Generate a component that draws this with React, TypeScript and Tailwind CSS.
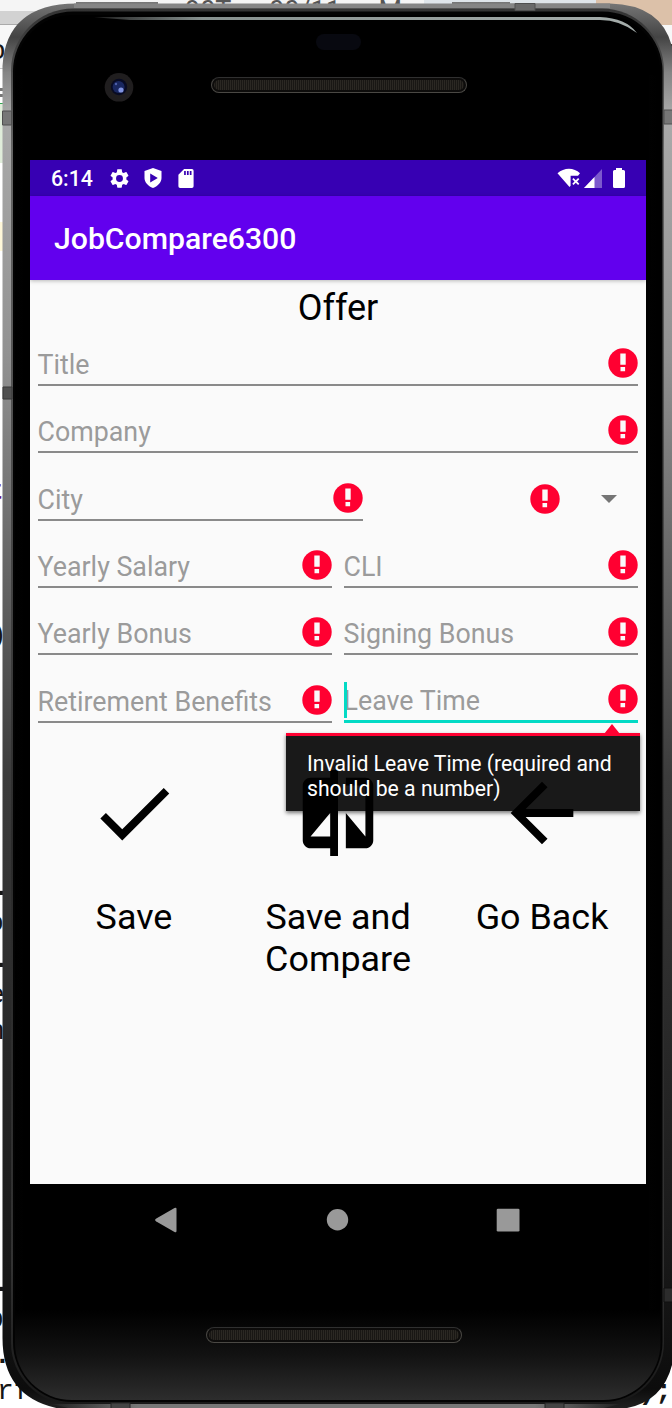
import React from "react";

function ErrorIcon() {
  return (
    <svg viewBox="0 0 30 30" className="-mt-[1px] h-[30px] w-[30px] shrink-0">
      <circle cx="15" cy="15" r="14.7" fill="#ff0031" />
      <path d="M12.3 5.6h5.4v11.2h-5.4zM12.5 19h4.6v4.2h-4.6z" fill="#fafafa" />
    </svg>
  );
}

function Field({ label, className = "flex-1", focused = false }: { label: string; className?: string; focused?: boolean }) {
  return (
    <div className={`relative -ml-[0.5px] flex h-[43px] items-center justify-between ${focused ? "border-b-[3px] border-[#03dac5]" : "border-b-2 border-[#8a8a8a]"} ${className}`}>
      <span className="whitespace-nowrap pt-[3px] text-[26.8px] leading-[32px] text-[#9b9b9b]">{label}</span>
      <ErrorIcon />
      {focused && <span className="absolute left-0 top-[2px] h-[36px] w-[3px] bg-[#03dac5]" />}
    </div>
  );
}

function Row({ children }: { children: React.ReactNode }) {
  return <div className="flex h-[67.4px] items-end gap-3">{children}</div>;
}

function Speaker() {
  return (
    <div className="h-4 w-[256px] rounded-full border border-[#4a4844] border-t-[#303030] bg-[#0d0c0b] p-[2px]">
      <div className="h-full w-full rounded-full bg-[repeating-linear-gradient(90deg,#2b2823_0px,#2b2823_1px,#191714_1px,#191714_2px)]" />
    </div>
  );
}

function Action({ label, path, wrap = "px-0" }: { label: string; path: string; wrap?: string }) {
  return (
    <div className="flex flex-1 flex-col items-center gap-[36px]">
      <svg viewBox="0 0 24 24" className="h-[94px] w-[94px]"><path d={path} /></svg>
      <span className={`text-center text-[35.9px] leading-[42px] text-black ${wrap}`}>{label}</span>
    </div>
  );
}

function StatusBar() {
  return (
    <div className="flex h-9 items-center bg-[#3700b3] px-[21px] text-white">
      <span className="w-[57px] pt-[2px] text-[21.3px] font-medium leading-none">6:14</span>
      <svg viewBox="0 0 24 24" className="h-[23px] w-[23px]" fill="white"><path d="M19.14 12.94c.04-.3.06-.61.06-.94 0-.32-.02-.64-.07-.94l2.03-1.58c.18-.14.23-.41.12-.61l-1.92-3.32c-.12-.22-.37-.29-.59-.22l-2.39.96c-.5-.38-1.03-.7-1.62-.94l-.36-2.54c-.04-.24-.24-.41-.48-.41h-3.84c-.24 0-.43.17-.47.41l-.36 2.54c-.59.24-1.13.57-1.62.94l-2.39-.96c-.22-.08-.47 0-.59.22L2.74 8.87c-.12.21-.08.47.12.61l2.03 1.58c-.05.3-.09.63-.09.94s.02.64.07.94l-2.03 1.58c-.18.14-.23.41-.12.61l1.92 3.32c.12.22.37.29.59.22l2.39-.96c.5.38 1.03.7 1.62.94l.36 2.54c.05.24.24.41.48.41h3.84c.24 0 .44-.17.47-.41l.36-2.54c.59-.24 1.13-.56 1.62-.94l2.39.96c.22.08.47 0 .59-.22l1.92-3.32c.12-.22.07-.47-.12-.61zM12 15.6A3.6 3.6 0 1 1 12 8.4a3.6 3.6 0 0 1 0 7.2z" /></svg>
      <svg viewBox="0 0 18 20" className="ml-[12.5px] h-5 w-[18px]" fill="white" fillRule="evenodd"><path d="M9 0 17.5 3v7c0 4-3.4 8.2-8.5 10C3.9 18.2.5 14 .5 10V3zM6.2 5.6v8.8l7.6-4.4z" /></svg>
      <svg viewBox="0 0 16 20" className="ml-[16px] h-[19px] w-4" fill="white" fillRule="evenodd"><path d="M6 0h8.2Q16 0 16 1.8v16.4q0 1.8-1.8 1.8H1.8Q0 20 0 18.2V6zM6 2.2v4h1.8v-4zm3 0v4h1.8v-4zm3 0v4h1.8v-4z" /></svg>
      <svg viewBox="0 0 24 20" className="ml-auto h-5 w-6" fill="white"><path d="M.5 5.2C7-.8 17-.8 23 5.2l-2 2.6h-7.4v9.9l-1.1 1.4zM15.3 11.2l1.2-1.2 2.3 2.2 2.3-2.2 1.2 1.2-2.2 2.3 2.2 2.3-1.2 1.2-2.3-2.2-2.3 2.2-1.2-1.2 2.2-2.3z" /></svg>
      <svg viewBox="0 0 18 19" className="ml-[3px] h-[19px] w-[18px]" fill="white"><path d="M18 0v19H0z" opacity=".35" /><path d="M10.5 8v11H0z" /></svg>
      <svg viewBox="0 0 12 20" className="ml-[11px] h-5 w-3" fill="white"><path d="M3 0h6v2h1.5Q12 2 12 3.5v15q0 1.5-1.5 1.5h-9Q0 20 0 18.5v-15Q0 2 1.5 2H3z" /></svg>
    </div>
  );
}

const editorLines = [
  { text: "t", style: "-ml-[13px] font-bold text-[#660e7a]" }, {}, {}, {},
  { text: ")", style: "-ml-[10px]" }, {}, {}, {}, {}, {}, {},
  { text: ".", style: "-ml-[7px] font-bold" },
  { text: "o", style: "-ml-[13px]" },
  { text: ".", style: "-ml-[7px] font-bold" },
  { text: "e", style: "-ml-[12px]" },
  { text: "h", style: "-ml-[12px]" }, {}, {}, {}, {}, {}, {},
  { text: ".", style: "-ml-[7px] font-bold" },
  { text: "p", style: "-ml-[13px]" },
  { text: ".", style: "-ml-[6px] font-bold" },
  { text: "rf", style: "-ml-[3px]", end: ");" },
] as { text?: string; style?: string; end?: string }[];

function Backdrop() {
  return (
    <div className="col-start-1 row-start-1 flex h-[1408px] flex-col overflow-hidden bg-white font-['Liberation_Mono',monospace] text-[28px] leading-[36px] text-[#161616]">
      <div className="flex h-[25px] shrink-0">
        <div className="h-full w-[424px] border-b border-[#aaa] bg-[linear-gradient(180deg,#f5f5f5_11px,#d2d2d2_11px)]">
          <div className="-mt-[5px] flex h-[30px] justify-between pl-[185px] pr-[22px] font-[Roboto,sans-serif] text-[27px] leading-[32px] text-[#555]"><span>90T</span><span>00/11</span><span>M</span></div>
        </div>
        <div className="w-[172px] bg-[#dfe5ea]" />
        <div className="flex-1 bg-[#dcc1a9]" />
      </div>
      <div className="flex h-[44px] shrink-0 justify-between overflow-hidden border-b border-[#c4c4c4] bg-[#f7f7f7] pt-[9px]">
        <span className="-ml-[11px]">o</span><span className="-mr-[9px]">e</span>
      </div>
      <div className="mt-[19px] h-[9px] w-3 shrink-0 border-y-[3px] border-[#777]" />
      <div className="mt-[6px] h-[60px] w-3 shrink-0 border-t border-[#32a852] bg-[#e0edda]" />
      <div className="mt-[59px] h-[29px] w-3 shrink-0 bg-[#fff8d9]" />
      <div className="mt-[223px] flex flex-col">
        {editorLines.map((line, i) => (
          <div key={i} className="flex h-9 justify-between whitespace-nowrap">
            <span className={line.style}>{line.text}</span>
            {line.end && <b>{line.end}</b>}
          </div>
        ))}
      </div>
    </div>
  );
}

function DeviceBody() {
  return (
    <svg viewBox="0 0 672 1408" className="col-start-1 row-start-1 h-[1408px] w-[672px]">
      <defs>
        <linearGradient id="metal" x1="0" y1="0" x2="0" y2="1">
          <stop offset="0" stopColor="#777" /><stop offset=".025" stopColor="#444" /><stop offset=".05" stopColor="#858585" /><stop offset=".08" stopColor="#aaa" />
          <stop offset=".25" stopColor="#929292" /><stop offset=".4" stopColor="#666" /><stop offset=".55" stopColor="#3c3c3c" />
          <stop offset=".8" stopColor="#222" /><stop offset=".92" stopColor="#151515" /><stop offset=".985" stopColor="#0c0c0c" /><stop offset="1" stopColor="#222" />
        </linearGradient>
        <linearGradient id="bevel" x1="0" y1="0" x2="0" y2="1">
          <stop offset="0" stopColor="#333" /><stop offset=".1" stopColor="#666" /><stop offset=".4" stopColor="#444" /><stop offset=".6" stopColor="#2b2b2b" /><stop offset=".9" stopColor="#333" /><stop offset="1" stopColor="#181818" />
        </linearGradient>
        <linearGradient id="glass" x1="0" y1="1310" x2="0" y2="1400" gradientUnits="userSpaceOnUse">
          <stop offset="0" stopColor="#000" /><stop offset=".5" stopColor="#121212" /><stop offset="1" stopColor="#2d2d2d" />
        </linearGradient>
        <linearGradient id="sheen"><stop offset="0" stopColor="#000" /><stop offset=".5" stopColor="#202020" /><stop offset="1" stopColor="#000" /></linearGradient>
        <linearGradient id="strip"><stop offset="0" stopColor="#222" /><stop offset=".15" stopColor="#777" /><stop offset=".85" stopColor="#777" /><stop offset="1" stopColor="#222" /></linearGradient>
        <linearGradient id="rim"><stop offset="0" stopColor="#222" /><stop offset=".2" stopColor="#87918f" /><stop offset="1" stopColor="#a5adab" /></linearGradient>
      </defs>
      <path d="M2.5 66Q6 4 76 3.5V2H158V4H452V2H510V3.5H610Q675 5 675 72V1338Q675 1410 606 1410H68Q2.5 1402 2.5 1338Z" fill="url(#metal)" />
      <path d="M74 3.5H610V8H74z" fill="#858585" />
      <rect x="11" y="8.5" width="653" height="1396" rx="62" fill="url(#bevel)" />
      <rect x="13" y="11.5" width="649.5" height="1390.5" rx="60" fill="#030303" />
      <rect x="15" y="15" width="645.5" height="1385" rx="57" fill="url(#glass)" />
      <path d="M15 75h8v1235h-8zM649 75h9v1235h-9z" fill="url(#sheen)" />
      <path d="M52 1404h568l-16 4H68z" fill="url(#strip)" />
      <path d="M515 3.5h20v7h-20z" fill="#6a6a6a" stroke="#505050" />
      <path d="M2.5 111h9v14h-9zM664 110h9v14h-9z" fill="#777" stroke="#505050" />
      <path d="M3 387h9v12H3z" fill="#505050" stroke="#383838" />
      <path d="M664 1288h9v14h-9z" fill="#2c2c2c" stroke="#111" />
      <path d="M111 1403h19v6h-19zM545 1403h19v6h-19z" fill="#444" stroke="#222" />
      <path d="M94 17.3 130 17H600Q626 18 637 33Q620 20 600 20H130z" fill="url(#rim)" />
    </svg>
  );
}

export default function App() {
  return (
    <main className="grid h-[1408px] w-[672px] overflow-hidden font-[Roboto,sans-serif]">
      <Backdrop />
      <DeviceBody />

      <div className="z-10 col-start-1 row-start-1 flex h-[1408px] flex-col pl-[30px] pr-[26px]">
        <header className="flex h-40 shrink-0 flex-col pt-[34px]">
          <div className="h-4 w-[45px] self-center rounded-full bg-[#080910]" />
          <div className="mt-[22px] flex items-start gap-[76.5px] pl-[74px]">
            <svg viewBox="0 0 30 30" className="h-[30px] w-[30px]">
              <circle cx="15" cy="15.3" r="14.3" fill="#201e1f" />
              <circle cx="15" cy="15" r="8.2" fill="#080b23" />
              <circle cx="14.6" cy="15" r="6" fill="#192760" />
              <circle cx="17" cy="18" r="2.6" fill="#8093e0" />
              <circle cx="12" cy="12" r="1.2" fill="#4e60ab" />
            </svg>
            <div className="pt-[5px]"><Speaker /></div>
          </div>
        </header>

        <section className="relative flex h-[1024px] shrink-0 flex-col bg-[#fafafa]">
          <StatusBar />
          <div className="z-10 flex h-[84px] shrink-0 items-center bg-[#6200ee] pl-6 pt-[3px] text-[30.2px] font-medium leading-none text-white shadow-[0_1px_4px_#0004]">JobCompare6300</div>
          <h1 className="h-[38.5px] shrink-0 pt-[7px] text-center text-[36px] leading-[42px] text-black">Offer</h1>
          <div className="px-2">
            <Row><Field label="Title" /></Row>
            <Row><Field label="Company" /></Row>
            <Row>
              <Field label="City" className="w-[325.5px]" />
              <div className="flex h-[43px] flex-1 items-center pl-[155px]">
                <ErrorIcon />
                <svg viewBox="0 0 16 8" className="ml-[41px] h-2 w-4"><path d="M0 0h16L8 8z" fill="#757575" /></svg>
              </div>
            </Row>
            <Row><Field label="Yearly Salary" /><Field label="CLI" /></Row>
            <Row><Field label="Yearly Bonus" /><Field label="Signing Bonus" /></Row>
            <Row><Field label="Retirement Benefits" /><Field label="Leave Time" focused /></Row>
          </div>
          <div className="flex px-[2px] pt-[43px]">
            <Action label="Save" path="M9 16.17 4.83 12l-1.42 1.41L9 19 21 7l-1.41-1.41z" />
            <Action label="Save and Compare" path="M10 3H5c-1.1 0-2 .9-2 2v14c0 1.1.9 2 2 2h5v2h2V1h-2v2zm0 15H5l5-6v6zm9-15h-5v2h5v13l-5-6v9h5c1.1 0 2-.9 2-2V5c0-1.1-.9-2-2-2z" wrap="px-4" />
            <Action label="Go Back" path="M20 11H7.83l5.59-5.59L12 4l-8 8 8 8 1.41-1.41L7.83 13H20v-2z" />
          </div>
          <div className="absolute left-[256px] top-[573px] h-[78px] w-[354px] border-t-[3px] border-[#ff0031] bg-black/90 pl-[21px] pt-[16px] text-[21.2px] leading-[24.6px] text-white shadow-[0_2px_4px_#0008]">
            <svg viewBox="0 0 16 10" className="absolute -top-[12px] left-[318px] h-[10px] w-4"><path d="M8 0 16 10H0z" fill="#ff0031" /></svg>
            Invalid Leave Time (required and<br />should be a number)
          </div>
        </section>

        <footer className="flex flex-1 flex-col gap-[71px]">
          <svg viewBox="0 0 616 72" className="h-[72px] w-[616px] shrink-0" fill="#999">
            <path d="m126.3 34.5 18.2-10.4q2-1.1 2 1v21.8q0 2-2 1L126.3 37.6q-2.4-1.5 0-3.1z" />
            <circle cx="307.5" cy="35.8" r="10.7" />
            <rect x="466.7" y="24.7" width="22.8" height="22.8" rx="1.3" />
          </svg>
          <div className="pl-[176px]"><Speaker /></div>
        </footer>
      </div>
    </main>
  );
}
